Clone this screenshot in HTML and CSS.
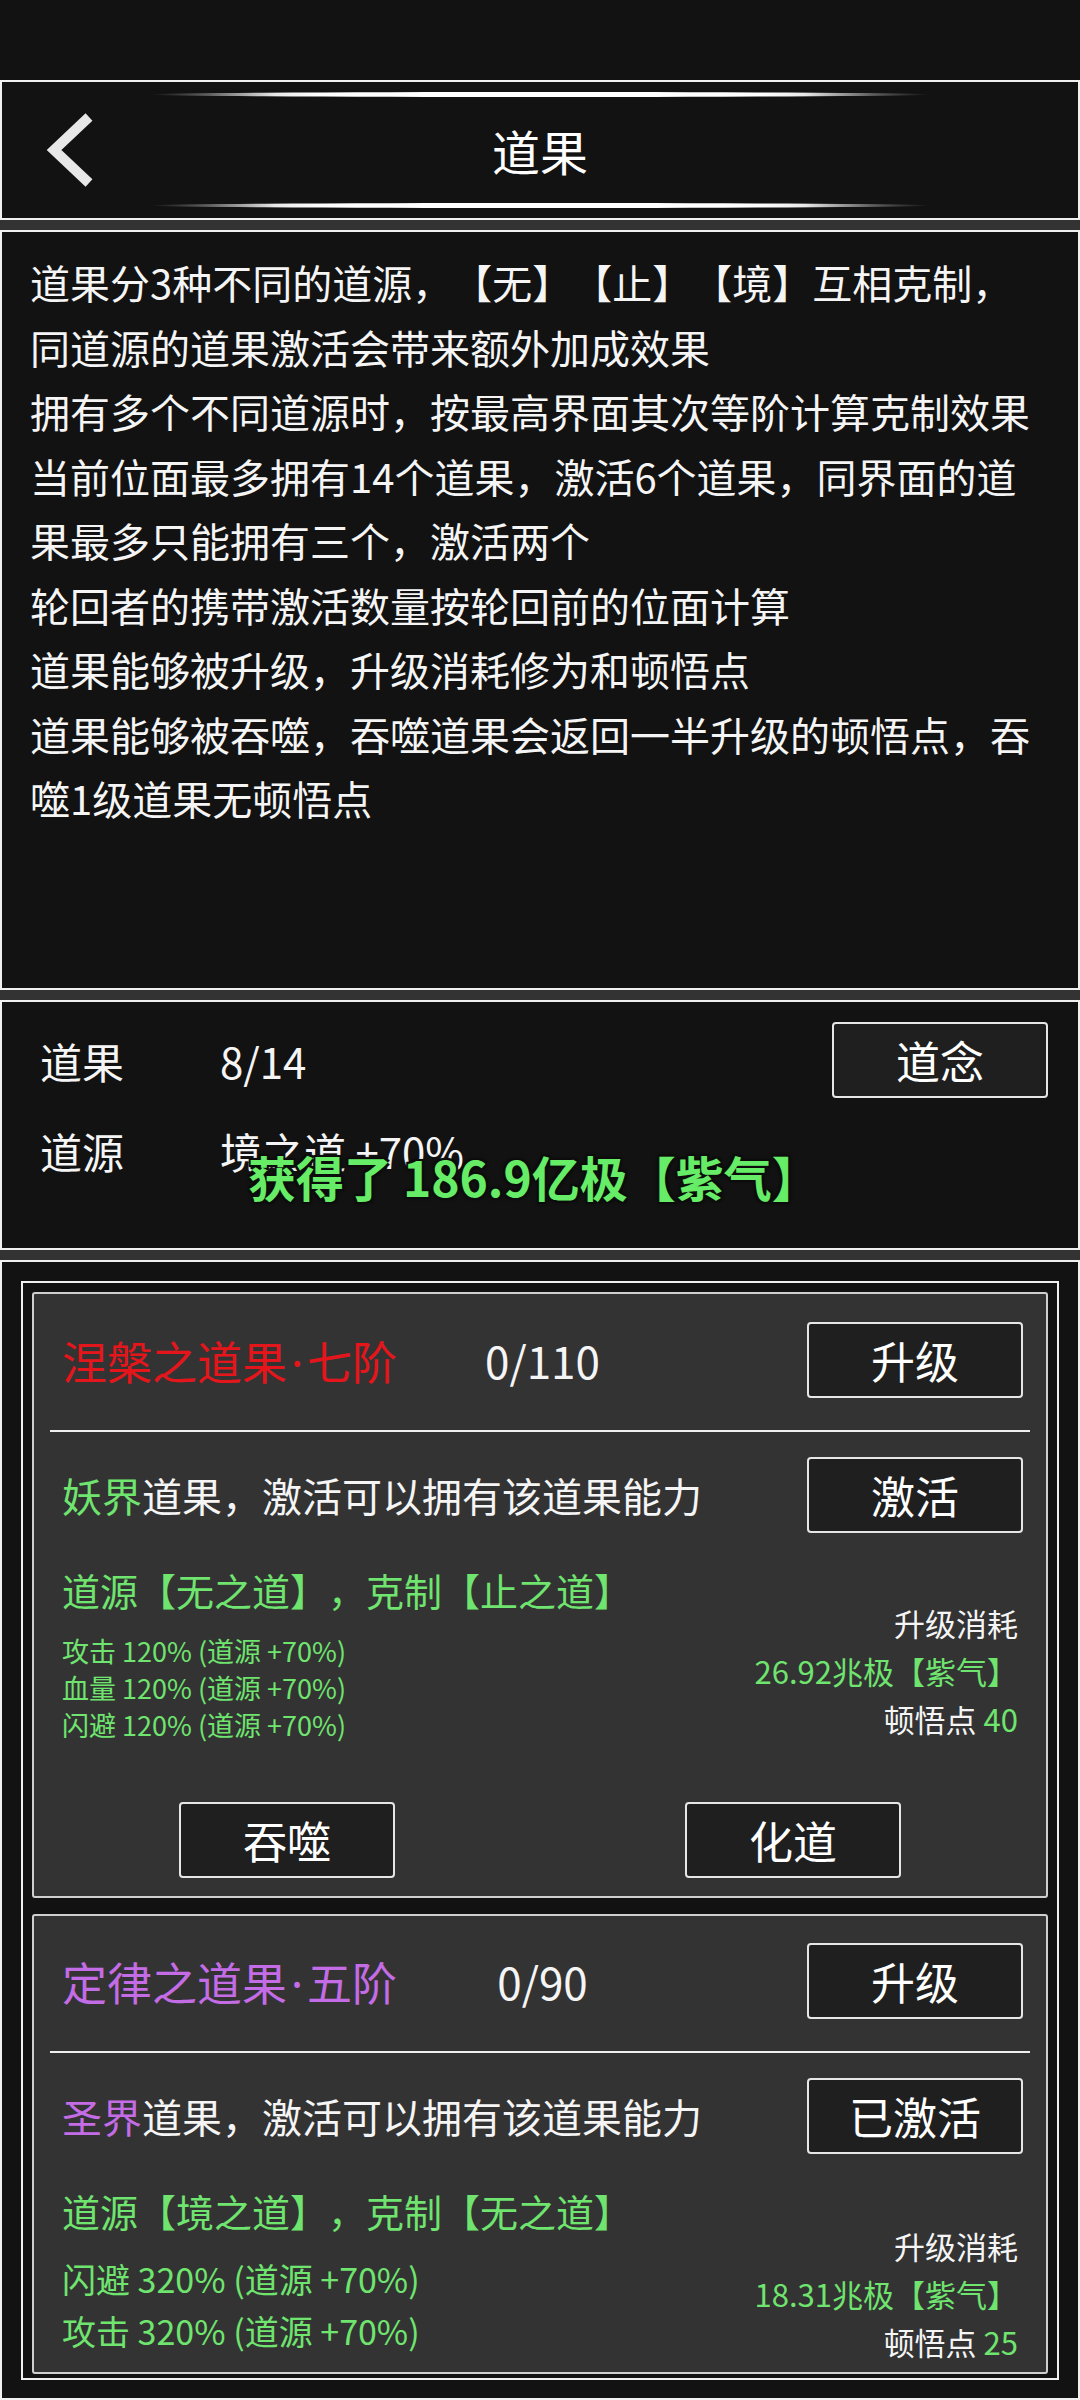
FILE: index.html
```html
<!DOCTYPE html>
<html lang="zh-CN">
<head>
<meta charset="utf-8">
<title>道果</title>
<link rel="stylesheet" href="styles.css">
</head>
<body>
<div class="page">
  <div class="status"></div>

  <header class="panel header">
    <div class="deco"></div>
    <div class="header-row">
      <span class="back">
        <svg width="48" height="74" viewBox="0 0 48 74"><polyline points="43,4 8,37 43,70" fill="none" stroke="#e8e8e8" stroke-width="10" stroke-linejoin="miter"/></svg>
      </span>
      <h1 class="title">道果</h1>
      <span></span>
    </div>
    <div class="deco"></div>
  </header>

  <section class="panel desc">
    <p>道果分3种不同的道源，【无】【止】【境】互相克制，</p>
    <p>同道源的道果激活会带来额外加成效果</p>
    <p>拥有多个不同道源时，按最高界面其次等阶计算克制效果</p>
    <p>当前位面最多拥有14个道果，激活6个道果，同界面的道<br>果最多只能拥有三个，激活两个</p>
    <p>轮回者的携带激活数量按轮回前的位面计算</p>
    <p>道果能够被升级，升级消耗修为和顿悟点</p>
    <p>道果能够被吞噬，吞噬道果会返回一半升级的顿悟点，吞<br>噬1级道果无顿悟点</p>
  </section>

  <section class="panel info">
    <div class="info-row">
      <span class="info-label">道果</span>
      <span class="info-value">8/14</span>
      <button class="btn">道念</button>
    </div>
    <div class="info-row">
      <span class="info-label">道源</span>
      <span class="info-value">境之道 +70%</span>
    </div>
    <div class="toast">获得了 186.9亿极【紫气】</div>
  </section>

  <section class="panel list">
    <div class="frame">
      <article class="card">
        <div class="card-head">
          <span class="card-title red">涅槃之道果<span class="dot">·</span>七阶</span>
          <span class="count">0/110</span>
          <button class="btn">升级</button>
        </div>
        <div class="divider"></div>
        <div class="card-act">
          <span class="act-text"><span class="green">妖界</span>道果，激活可以拥有该道果能力</span>
          <button class="btn">激活</button>
        </div>
        <div class="stats">
          <div class="stats-left">
            <div class="source green">道源【无之道】，克制【止之道】</div>
            <div class="attrs green">
              <div>攻击 120% (道源 +70%)</div>
              <div>血量 120% (道源 +70%)</div>
              <div>闪避 120% (道源 +70%)</div>
            </div>
          </div>
          <div class="cost">
            <div>升级消耗</div>
            <div class="green">26.92兆极【紫气】</div>
            <div>顿悟点 <span class="green">40</span></div>
          </div>
        </div>
        <div class="actions">
          <button class="btn">吞噬</button>
          <button class="btn">化道</button>
        </div>
      </article>

      <article class="card card-last">
        <div class="card-head">
          <span class="card-title purple">定律之道果<span class="dot">·</span>五阶</span>
          <span class="count">0/90</span>
          <button class="btn">升级</button>
        </div>
        <div class="divider"></div>
        <div class="card-act">
          <span class="act-text"><span class="purple">圣界</span>道果，激活可以拥有该道果能力</span>
          <button class="btn">已激活</button>
        </div>
        <div class="stats">
          <div class="stats-left">
            <div class="source green">道源【境之道】，克制【无之道】</div>
            <div class="attrs attrs-large green">
              <div>闪避 320% (道源 +70%)</div>
              <div>攻击 320% (道源 +70%)</div>
            </div>
          </div>
          <div class="cost">
            <div>升级消耗</div>
            <div class="green">18.31兆极【紫气】</div>
            <div>顿悟点 <span class="green">25</span></div>
          </div>
        </div>
      </article>
    </div>
  </section>
</div>
</body>
</html>
```

FILE: styles.css
```css
* {
  box-sizing: border-box;
}

html, body {
  margin: 0;
  padding: 0;
}

body {
  background: #333333;
  font-family: "Noto Sans CJK SC", "Noto Sans", sans-serif;
  color: #f5f5f5;
  text-spacing-trim: space-all;
  font-feature-settings: "halt" 0, "palt" 0;
}

.page {
  width: 1080px;
  height: 2400px;
  overflow: hidden;
  background: #333333;
}

.status {
  height: 80px;
  background: #121212;
}

.panel {
  border: 2px solid #f0f0f0;
  background: #121212;
}

/* header */
.header {
  height: 140px;
  margin-bottom: 10px;
  padding: 10px 0;
  display: flex;
  flex-direction: column;
}

.deco {
  width: 780px;
  height: 5px;
  margin: 0 auto;
  border-radius: 50%;
  background: linear-gradient(90deg,
    rgba(255,255,255,0) 0%,
    rgba(255,255,255,0.35) 8%,
    rgba(255,255,255,0.9) 16%,
    #ffffff 22%,
    #ffffff 78%,
    rgba(255,255,255,0.9) 84%,
    rgba(255,255,255,0.35) 92%,
    rgba(255,255,255,0) 100%);
}

.header-row {
  flex: 1;
  display: grid;
  grid-template-columns: 1fr auto 1fr;
  align-items: center;
  padding: 0 44px;
}

.back {
  display: flex;
  align-items: center;
}

.back svg {
  display: block;
}

.title {
  margin: 0;
  font-size: 48px;
  font-weight: 400;
  line-height: 1;
  color: #ffffff;
}

/* description */
.desc {
  height: 760px;
  margin-bottom: 10px;
  padding: 18px 20px 0 28px;
}

.desc p {
  margin: 0;
  font-size: 40px;
  line-height: 64.5px;
  white-space: nowrap;
  color: #f5f5f5;
}

/* info */
.info {
  position: relative;
  height: 250px;
  margin-bottom: 10px;
  padding: 20px 30px 0 38px;
}

.info-row {
  display: flex;
  align-items: center;
  height: 76px;
}

.info-row + .info-row {
  margin-top: 14px;
}

.info-label {
  width: 180px;
  font-size: 42px;
}

.info-value {
  flex: 1;
  font-size: 42px;
}

.toast {
  position: absolute;
  left: 246px;
  top: 150px;
  font-size: 48px;
  font-weight: 700;
  line-height: 1;
  color: #66ec66;
  white-space: nowrap;
  text-shadow:
    2px 2px 0 #0c0c0c,
    -2px -2px 0 #0c0c0c,
    2px -2px 0 #0c0c0c,
    -2px 2px 0 #0c0c0c,
    0 0 4px #000000;
}

/* buttons */
.btn {
  width: 216px;
  height: 76px;
  padding: 0;
  border: 2px solid #e6e6e6;
  border-radius: 4px;
  background: #1f1f1f;
  color: #ffffff;
  font-family: "Noto Sans CJK SC", "Noto Sans", sans-serif;
  font-size: 44px;
  line-height: 1;
}

/* list */
.list {
  height: 1140px;
  padding: 19px 19px 0 19px;
}

.frame {
  height: 1099px;
  border: 2px solid #f0f0f0;
  padding: 9px;
  overflow: hidden;
  display: flex;
  flex-direction: column;
  gap: 16px;
}

.card {
  flex-shrink: 0;
  border: 2px solid #cfcfcf;
  border-radius: 3px;
  background: #333333;
}

.card-head {
  display: grid;
  grid-template-columns: 1fr auto 1fr;
  align-items: center;
  padding: 28px 23px 32px 28px;
}

.card-last .card-head {
  padding-top: 27px;
}

.card-title {
  font-size: 45px;
  white-space: nowrap;
}

.dot {
  font-family: "Noto Sans", "DejaVu Sans", sans-serif;
  margin: 0 4px;
}

.count {
  font-size: 44px;
  color: #f5f5f5;
}

.card-head .btn {
  justify-self: end;
}

.divider {
  height: 2px;
  margin: 0 16px;
  background: #f0f0f0;
}

.card-act {
  display: flex;
  align-items: center;
  justify-content: space-between;
  padding: 25px 23px 0 28px;
}

.act-text {
  font-size: 40px;
  color: #f5f5f5;
}

.stats {
  display: flex;
  justify-content: space-between;
  align-items: flex-end;
  padding: 32px 28px 0 28px;
}

.card-last .stats {
  padding-bottom: 15px;
}

.card-last .cost {
  margin-bottom: -9px;
}

.source {
  font-size: 38px;
  line-height: 50px;
}

.attrs {
  margin-top: 17px;
  font-size: 27px;
  line-height: 37px;
}

.attrs-large {
  font-size: 34px;
  line-height: 52px;
}

.cost {
  text-align: right;
  font-size: 31px;
  line-height: 48px;
  color: #f5f5f5;
}

.actions {
  display: flex;
  justify-content: space-around;
  padding: 59px 0 18px 0;
}

.red {
  color: #e4161c;
}

.purple {
  color: #c46ce6;
}

.green {
  color: #6fe46f;
}
```
